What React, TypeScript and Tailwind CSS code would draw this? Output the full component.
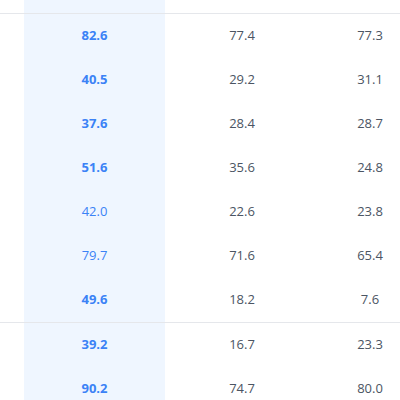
import * as React from "react";

type Row = { a: string; b: string; c: string; bold: boolean };

const groupOne: Row[] = [
  { a: "82.6", b: "77.4", c: "77.3", bold: true },
  { a: "40.5", b: "29.2", c: "31.1", bold: true },
  { a: "37.6", b: "28.4", c: "28.7", bold: true },
  { a: "51.6", b: "35.6", c: "24.8", bold: true },
  { a: "42.0", b: "22.6", c: "23.8", bold: false },
  { a: "79.7", b: "71.6", c: "65.4", bold: false },
  { a: "49.6", b: "18.2", c: "7.6", bold: true },
];

const groupTwo: Row[] = [
  { a: "39.2", b: "16.7", c: "23.3", bold: true },
  { a: "90.2", b: "74.7", c: "80.0", bold: true },
];

function DataRow({ row }: { row: Row }) {
  return (
    <div className="flex h-[44px] items-center">
      <div className="w-[24px] shrink-0" />
      <div
        className={
          "flex h-full w-[141px] shrink-0 items-center justify-center bg-[#eff6ff] text-[#3b82f6] " +
          (row.bold ? "font-bold" : "font-normal")
        }
      >
        {row.a}
      </div>
      <div className="flex w-[154px] shrink-0 justify-center">{row.b}</div>
      <div className="flex w-[102px] shrink-0 justify-center">{row.c}</div>
    </div>
  );
}

export default function App() {
  return (
    <div
      className="h-[400px] w-[400px] overflow-hidden bg-white text-[13px] text-[#4b5563]"
      style={{ fontFamily: '"Open Sans", "Noto Sans", sans-serif' }}
    >
      <div className="w-[421px]">
        <div className="flex h-[13px]">
          <div className="w-[24px] shrink-0" />
          <div className="w-[141px] shrink-0 bg-[#eff6ff]" />
        </div>
        <div className="border-t border-[#e5e7eb]">
          {groupOne.map((r) => (
            <DataRow key={r.a} row={r} />
          ))}
        </div>
        <div className="border-t border-[#e5e7eb]">
          {groupTwo.map((r) => (
            <DataRow key={r.a} row={r} />
          ))}
        </div>
      </div>
    </div>
  );
}
